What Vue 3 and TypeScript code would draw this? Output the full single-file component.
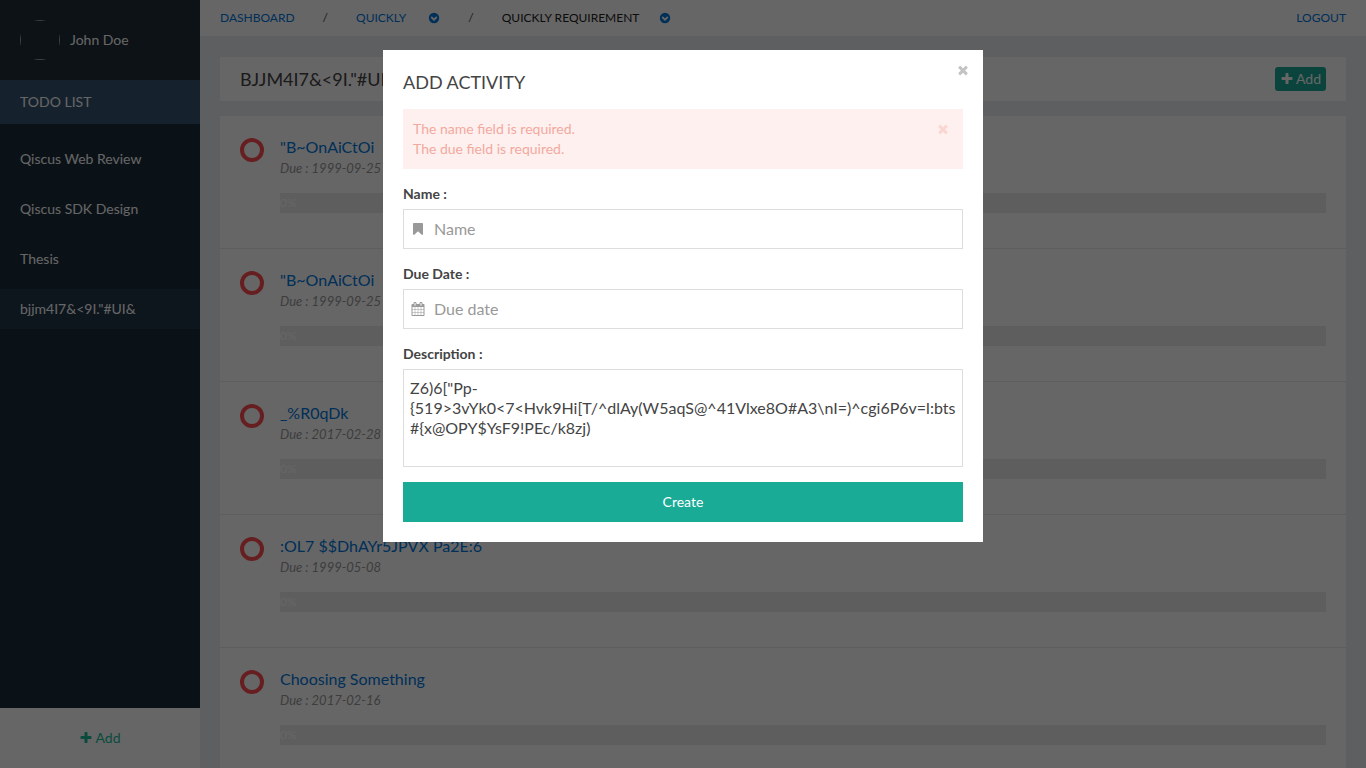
<script setup lang="ts">
import { ref } from 'vue'

interface Activity {
  name: string
  due: string
  progress: number
}

const icons = {
  plus: 'M1600 736v192q0 40-28 68t-68 28h-416v416q0 40-28 68t-68 28h-192q-40 0-68-28t-28-68v-416h-416q-40 0-68-28t-28-68v-192q0-40 28-68t68-28h416v-416q0-40 28-68t68-28h192q40 0 68 28t28 68v416h416q40 0 68 28t28 68z',
  close: 'M1490 1322q0 40-28 68l-136 136q-28 28-68 28t-68-28l-294-294-294 294q-28 28-68 28t-68-28l-136-136q-28-28-28-68t28-68l294-294-294-294q-28-28-28-68t28-68l136-136q28-28 68-28t68 28l294 294 294-294q28-28 68-28t68 28l136 136q28 28 28 68t-28 68l-294 294 294 294q28 28 28 68z',
  bookmark: 'M1420 128q23 0 44 9 33 13 52.5 41t19.5 62v1289q0 34-19.5 62t-52.5 41q-19 8-44 8-48 0-83-32l-441-424-441 424q-36 33-83 33-23 0-44-9-33-13-52.5-41t-19.5-62v-1289q0-34 19.5-62t52.5-41q21-9 44-9h1048z',
  calendar: 'M192 1664h288v-288h-288v288zm352 0h320v-288h-320v288zm-352-352h288v-320h-288v320zm352 0h320v-320h-320v320zm-352-384h288v-288h-288v288zm736 736h320v-288h-320v288zm-384-736h320v-288h-320v288zm768 736h288v-288h-288v288zm-384-352h320v-320h-320v320zm-352-864v-288q0-13-9.5-22.5t-22.5-9.5h-64q-13 0-22.5 9.5t-9.5 22.5v288q0 13 9.5 22.5t22.5 9.5h64q13 0 22.5-9.5t9.5-22.5zm736 864h288v-320h-288v320zm-384-384h320v-288h-320v288zm384 0h288v-288h-288v288zm32-480v-288q0-13-9.5-22.5t-22.5-9.5h-64q-13 0-22.5 9.5t-9.5 22.5v288q0 13 9.5 22.5t22.5 9.5h64q13 0 22.5-9.5t9.5-22.5zm384-64v1280q0 52-38 90t-90 38h-1408q-52 0-90-38t-38-90v-1280q0-52 38-90t90-38h128v-96q0-66 47-113t113-47h64q66 0 113 47t47 113v96h384v-96q0-66 47-113t113-47h64q66 0 113 47t47 113v96h128q52 0 90 38t38 90z',
}

const projectName = 'bjjm4I7&<9I."#UI&'
const projects: string[] = ['Qiscus Web Review', 'Qiscus SDK Design', 'Thesis', projectName]
const activities: Activity[] = [
  { name: '"B~OnAiCtOi', due: '1999-09-25', progress: 0 },
  { name: '"B~OnAiCtOi', due: '1999-09-25', progress: 0 },
  { name: '_%R0qDk', due: '2017-02-28', progress: 0 },
  { name: ':OL7 $$DhAYr5JPVX Pa2E:6', due: '1999-05-08', progress: 0 },
  { name: 'Choosing Something', due: '2017-02-16', progress: 0 },
]

const modalOpen = ref(true)
const errors = ref<string[]>(['The name field is required.', 'The due field is required.'])
const name = ref('')
const due = ref('')
const description = ref('Z6)6["Pp-{519>3vYk0<7<Hvk9Hi[T/^dlAy(W5aqS@^41Vlxe8O#A3\\nI=)^cgi6P6v=l:bts#{x@OPY$YsF9!PEc/k8zj)')
</script>

<template>
  <div class="page">
    <aside class="sidebar">
      <div class="profile">
        <span class="avatar"></span>
        <span>John Doe</span>
      </div>
      <h2 class="side-title">TODO LIST</h2>
      <nav class="projects">
        <a v-for="p in projects" :key="p" href="#" :class="{ current: p === projectName }">{{ p }}</a>
      </nav>
      <button type="button" class="side-add">
        <svg class="icon" viewBox="0 0 1792 1792"><path :d="icons.plus" /></svg>
        Add
      </button>
    </aside>

    <div class="main">
      <header class="topbar">
        <nav class="crumbs">
          <a href="#">DASHBOARD</a>
          <span class="slash">/</span>
          <a href="#">QUICKLY</a>
          <button type="button" class="drop" aria-label="Switch project">
            <svg viewBox="0 0 12 12"><circle cx="6" cy="6" r="5.2" /><path d="M3.2 5l2.8 2.7L8.8 5" /></svg>
          </button>
          <span class="slash">/</span>
          <span class="here">QUICKLY REQUIREMENT</span>
          <button type="button" class="drop" aria-label="Switch requirement">
            <svg viewBox="0 0 12 12"><circle cx="6" cy="6" r="5.2" /><path d="M3.2 5l2.8 2.7L8.8 5" /></svg>
          </button>
        </nav>
        <a href="#">LOGOUT</a>
      </header>

      <main class="content">
        <div class="heading">
          <h1>{{ projectName }}</h1>
          <button type="button" class="add">
            <svg class="icon" viewBox="0 0 1792 1792"><path :d="icons.plus" /></svg>
            Add
          </button>
        </div>
        <ul class="activities">
          <li v-for="(a, i) in activities" :key="i">
            <span class="ring"></span>
            <div class="info">
              <a href="#">{{ a.name }}</a>
              <p class="due">Due : {{ a.due }}</p>
              <div class="progress"><div :style="{ width: a.progress + '%' }">{{ a.progress }}%</div></div>
            </div>
          </li>
        </ul>
      </main>
    </div>

    <div v-if="modalOpen" class="overlay">
      <section class="modal" role="dialog" aria-modal="true" aria-labelledby="modal-title">
        <button type="button" class="close modal-close" aria-label="Close" @click="modalOpen = false">
          <svg class="icon" viewBox="0 0 1792 1792"><path :d="icons.close" /></svg>
        </button>
        <h2 id="modal-title">ADD ACTIVITY</h2>
        <form @submit.prevent>
          <div v-if="errors.length" class="alert" role="alert">
            <div><p v-for="e in errors" :key="e">{{ e }}</p></div>
            <button type="button" class="close" aria-label="Dismiss" @click="errors = []">
              <svg class="icon" viewBox="0 0 1792 1792"><path :d="icons.close" /></svg>
            </button>
          </div>
          <div class="field">
            <label for="name">Name :</label>
            <div class="control">
              <svg class="icon" viewBox="0 0 1792 1792"><path :d="icons.bookmark" /></svg>
              <input id="name" v-model="name" type="text" placeholder="Name">
            </div>
          </div>
          <div class="field">
            <label for="due">Due Date :</label>
            <div class="control">
              <svg class="icon" viewBox="0 0 1792 1792"><path :d="icons.calendar" /></svg>
              <input id="due" v-model="due" type="text" placeholder="Due date">
            </div>
          </div>
          <div class="field">
            <label for="description">Description :</label>
            <textarea id="description" v-model="description" spellcheck="false"></textarea>
          </div>
          <button type="submit" class="create">Create</button>
        </form>
      </section>
    </div>
  </div>
</template>

<style>
body {
  margin: 0;
  overflow: hidden;
}
</style>

<style scoped>
.page {
  display: flex;
  height: 100vh;
  overflow: hidden;
  background: #e9edf0;
  color: #444;
  font: 14px/20px Lato, "Liberation Sans", sans-serif;
}
.page * {
  box-sizing: border-box;
}
h1, h2, p, ul {
  margin: 0;
  padding: 0;
  font-weight: 400;
}
a {
  color: #07d;
  text-decoration: none;
}
button {
  margin: 0;
  padding: 0;
  border: 0;
  background: none;
  color: inherit;
  font: inherit;
  cursor: pointer;
}
.icon {
  display: block;
  width: 14px;
  height: 14px;
  fill: currentColor;
}

.sidebar {
  display: flex;
  flex-direction: column;
  flex: none;
  width: 200px;
  background: #1c2d3b;
  color: #fff;
}
.profile {
  display: flex;
  align-items: center;
  gap: 10px;
  padding: 20px;
  background: #1e2d38;
}
.avatar {
  width: 40px;
  height: 40px;
  border-radius: 50%;
  overflow: hidden;
}
.avatar::before {
  content: "";
  display: block;
  height: 100%;
  box-sizing: border-box;
  border: 1px solid #a0a0a0;
}
.side-title {
  padding: 12px 20px;
  background: #365370;
  font-size: 14px;
}
.projects {
  display: flex;
  flex-direction: column;
  flex: 1;
  gap: 10px;
  padding-top: 15px;
}
.projects a {
  padding: 10px 20px;
  color: #fff;
}
.projects .current {
  background: #22364a;
}
.side-add {
  display: flex;
  align-items: center;
  justify-content: center;
  gap: 2px;
  height: 60px;
  background: #fff;
  color: #1abc9c;
}

.main {
  flex: 1;
  min-width: 0;
}
.topbar {
  display: flex;
  justify-content: space-between;
  padding: 8px 20px;
  background: #fff;
  font-size: 12px;
}
.crumbs {
  display: flex;
  align-items: center;
}
.slash {
  padding: 0 28px;
}
.here {
  color: #222;
}
.drop {
  margin-left: 22px;
}
.here + .drop {
  margin-left: 20px;
}
.drop svg {
  display: block;
  width: 12px;
  height: 12px;
  fill: #07d;
}
.drop path {
  fill: none;
  stroke: #fff;
  stroke-width: 1.8;
}
.content {
  padding: 21px 20px;
}
.heading {
  display: flex;
  align-items: center;
  justify-content: space-between;
  margin-bottom: 15px;
  padding: 10px 20px;
  background: #fff;
}
h1 {
  font-size: 18px;
  line-height: 24px;
  text-transform: uppercase;
}
.add {
  display: flex;
  align-items: center;
  gap: 2px;
  height: 24px;
  padding: 0 5px;
  border-radius: 3px;
  background: #1aab97;
  color: #fff;
}
.activities {
  list-style: none;
  background: #fff;
}
.activities li {
  display: flex;
  gap: 16px;
  padding: 20px 20px 35px;
  border-bottom: 1px solid #ececec;
}
.ring {
  flex: none;
  width: 24px;
  height: 24px;
  margin-top: 2px;
  border: 4px solid #ff4c50;
  border-radius: 50%;
}
.info {
  flex: 1;
  min-width: 0;
}
.info a {
  display: block;
  font-size: 16px;
  line-height: 22px;
}
.due {
  margin-bottom: 15px;
  color: #999;
  font-size: 13px;
  font-style: italic;
}
.progress {
  background: #ececec;
  color: #fff;
  font-size: 12px;
}

.overlay {
  position: fixed;
  inset: 0;
  padding: 50px 20px;
  background: rgba(0, 0, 0, 0.6);
}
.modal {
  position: relative;
  max-width: 600px;
  margin: 0 auto;
  padding: 20px;
  background: #fff;
}
.modal h2 {
  margin-bottom: 15px;
  font-size: 18px;
  line-height: 24px;
}
.close {
  align-self: flex-start;
  padding: 3px;
}
.modal-close {
  position: absolute;
  top: 10px;
  right: 10px;
  color: #c3c3c3;
}
.alert {
  display: flex;
  justify-content: space-between;
  padding: 10px;
  background: #fff0f0;
  color: #f2a99d;
}
.alert .close {
  color: #fad6d0;
}
.field {
  margin: 15px 0;
}
label {
  display: block;
  margin-bottom: 5px;
  font-weight: 700;
}
.control {
  display: flex;
  align-items: center;
  gap: 9px;
  height: 40px;
  padding-left: 7px;
  border: 1px solid #ddd;
  color: #999;
}
input {
  flex: 1;
  min-width: 0;
  height: 100%;
  padding: 0 0 2px;
  border: 0;
  outline: 0;
  background: none;
  color: #444;
  font: 16px/20px Lato, "Liberation Sans", sans-serif;
}
input::placeholder {
  color: #999;
  opacity: 1;
}
textarea {
  display: block;
  width: 100%;
  height: 98px;
  padding: 8px 6px;
  border: 1px solid #ddd;
  outline: 0;
  resize: none;
  overflow: auto;
  color: #444;
  font: 16px/20px Lato, "Liberation Sans", sans-serif;
}
.create {
  display: block;
  width: 100%;
  height: 40px;
  background: #1aab97;
  color: #fff;
}
</style>
